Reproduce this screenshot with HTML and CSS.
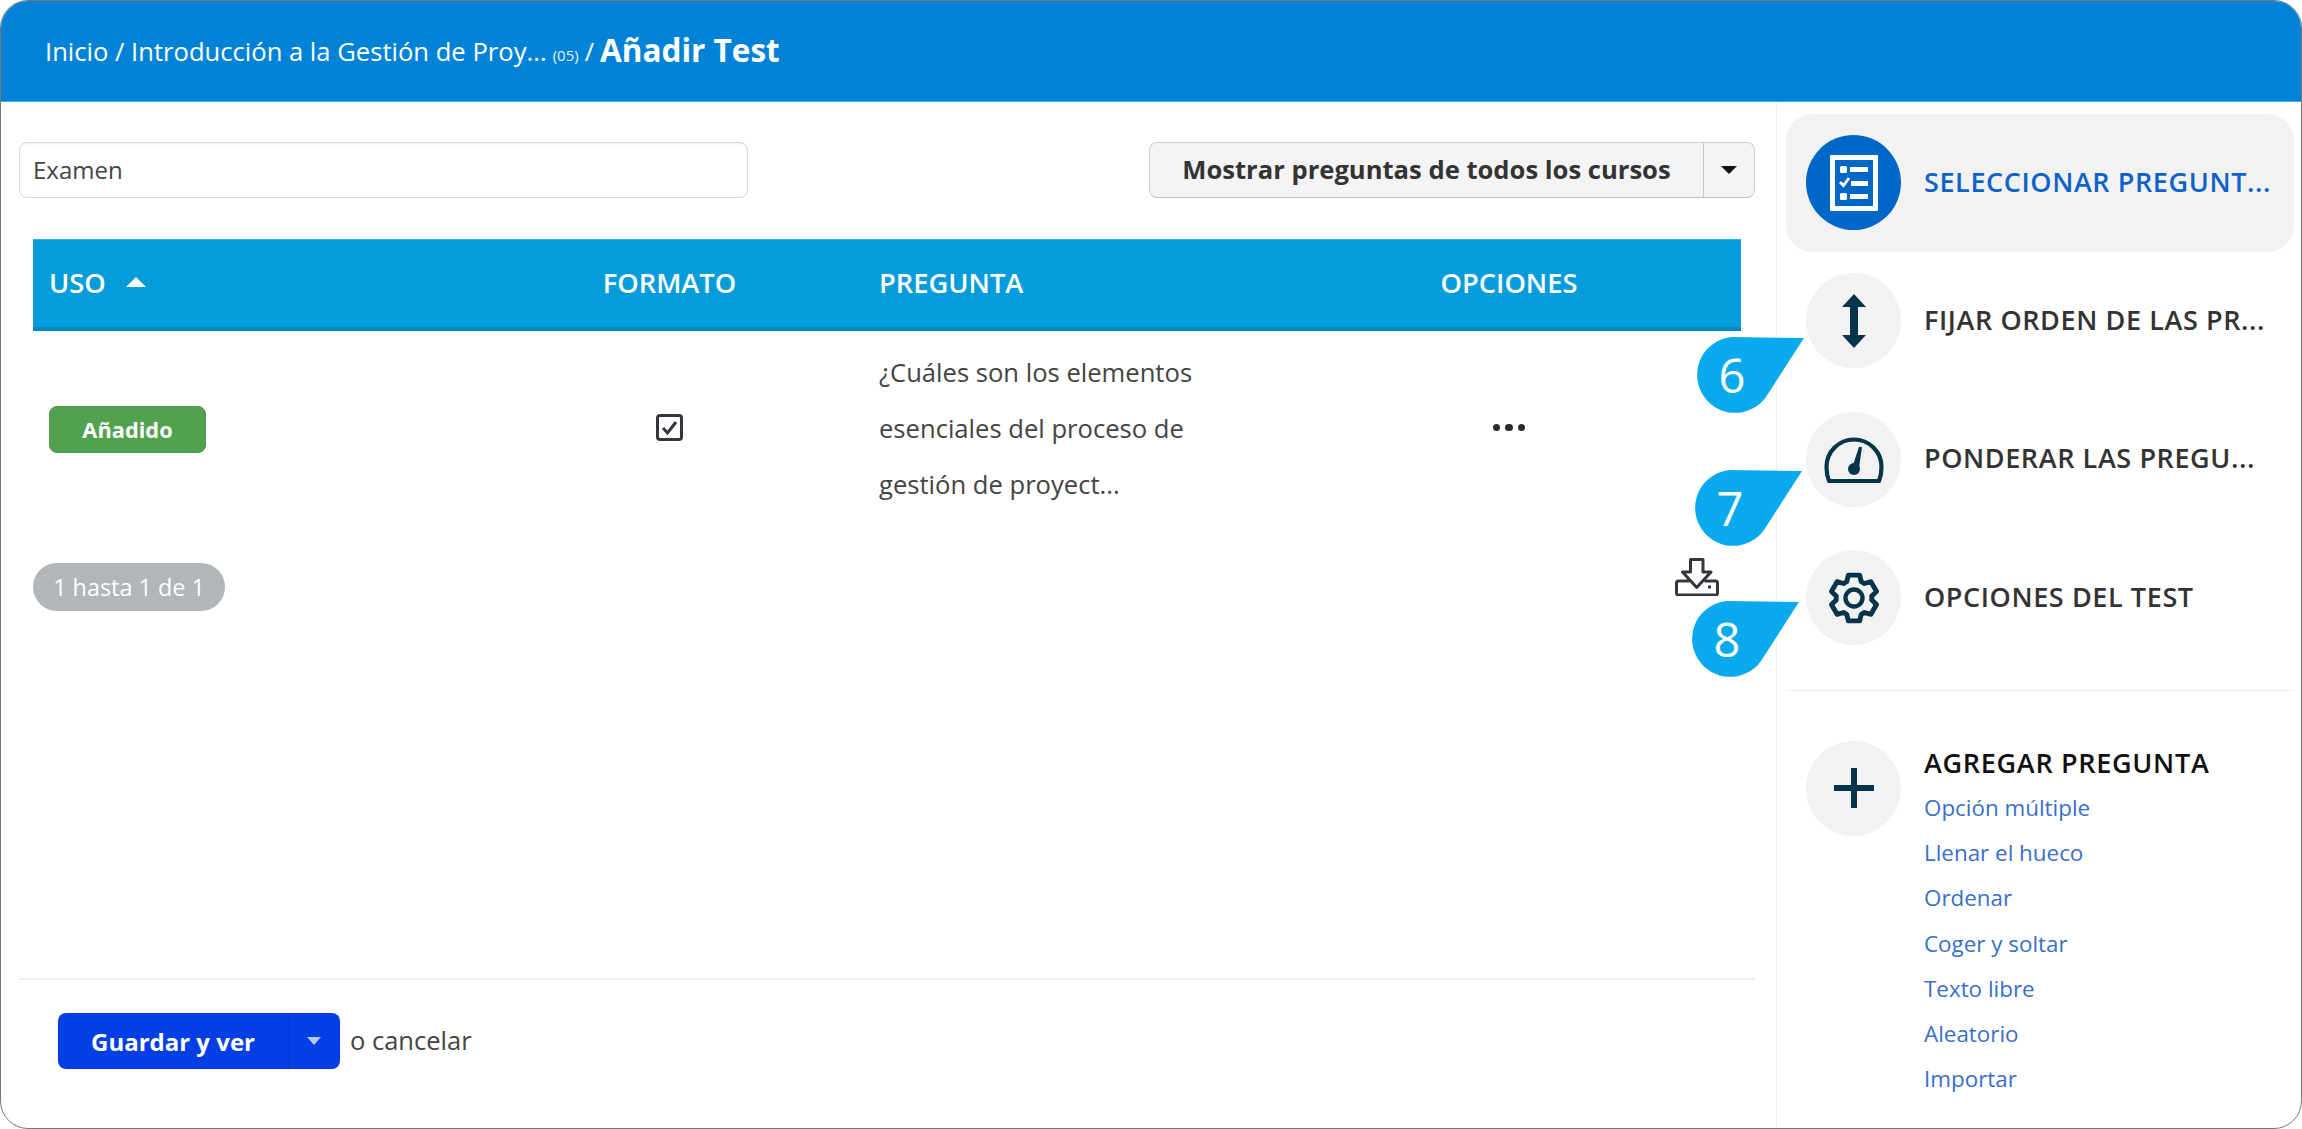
FILE: index.html
```html
<!DOCTYPE html>
<html lang="es">
<head>
<meta charset="utf-8">
<title>Añadir Test</title>
<link rel="stylesheet" href="styles.css">
</head>
<body>
<div class="frame">
  <header class="topbar">
    <span class="crumb">Inicio / Introducción a la Gestión de Proy...</span>
    <small class="count">(05)</small>
    <span class="crumb">/</span>
    <strong class="title">Añadir Test</strong>
  </header>
  <div class="layout">
    <main class="content">
      <div class="toolbar">
        <div class="search">Examen</div>
        <div class="split">
          <div class="split-label">Mostrar preguntas de todos los cursos</div>
          <div class="split-caret"><i class="caret"></i></div>
        </div>
      </div>
      <div class="table">
        <div class="thead">
          <div class="th th-first">USO <i class="sort"></i></div>
          <div class="th th-center">FORMATO</div>
          <div class="th">PREGUNTA</div>
          <div class="th th-center">OPCIONES</div>
        </div>
        <div class="trow">
          <div class="td"><span class="badge">Añadido</span></div>
          <div class="td td-center">
            <svg class="check" viewBox="0 0 27 27" width="27" height="27"><rect x="1.500" y="1.500" width="24" height="24" rx="2.500" fill="#fff" stroke="#33363f" stroke-width="3"/><path d="M7 14l4.500 5L20 8" fill="none" stroke="#33363f" stroke-width="3"/></svg>
          </div>
          <div class="td td-question">¿Cuáles son los elementos<br>esenciales del proceso de<br>gestión de proyect...</div>
          <div class="td td-center"><span class="dots"><i></i><i></i><i></i></span></div>
        </div>
      </div>
      <div class="pager">
        <span class="pill">1 hasta 1 de 1</span>
        <svg class="download" viewBox="0 0 43 38" width="44" height="38"><path d="M15 1.500h12.500v12.500h8L21.200 29.500 7 14h8zM14 23H3a2 2 0 0 0-2 2v10a2 2 0 0 0 2 2h37a2 2 0 0 0 2-2V25a2 2 0 0 0-2-2H29" fill="none" stroke="#33363f" stroke-width="3" stroke-linejoin="round"/><rect x="32.500" y="27.500" width="3" height="3" fill="#33363f"/></svg>
      </div>
      <div class="footer">
        <div class="save">
          <span class="save-label">Guardar y ver</span>
          <span class="save-caret"><i class="caret caret-light"></i></span>
        </div>
        <span class="cancel">o cancelar</span>
      </div>
    </main>
    <aside class="sidebar">
      <div class="item item-active">
        <span class="circle circle-active">
          <svg viewBox="0 0 48 56" width="48" height="56"><path fill="#fff" fill-rule="evenodd" d="M1 0h46a1 1 0 0 1 1 1v54a1 1 0 0 1-1 1H1a1 1 0 0 1-1-1V1a1 1 0 0 1 1-1zm4 5v46h38V5z"/><rect x="10" y="11" width="7" height="7" rx="1.500" fill="#fff"/><rect x="20" y="12" width="18" height="5" fill="#fff"/><path d="M10 27l3.500 3.500L19 23" fill="none" stroke="#fff" stroke-width="2.800"/><rect x="21" y="26" width="17" height="5" fill="#fff"/><rect x="10" y="38" width="7" height="7" rx="1.500" fill="#fff"/><rect x="20" y="39" width="18" height="5" fill="#fff"/></svg>
        </span>
        <span class="label label-active">SELECCIONAR PREGUNT...</span>
      </div>
      <div class="item">
        <span class="circle">
          <svg viewBox="0 0 24 54" width="24" height="54"><path fill="#05344b" d="M12 0l12 13h-8v28h8L12 54 0 41h8V13H0z"/></svg>
        </span>
        <span class="label">FIJAR ORDEN DE LAS PR...</span>
      </div>
      <div class="item">
        <span class="circle">
          <svg viewBox="0 0 60 48" width="60" height="48"><path d="M5 46C3 41 2.500 37 2.500 32a27.500 27.500 0 0 1 55 0c0 5-.5 9-2.500 14z" fill="none" stroke="#05344b" stroke-width="4.200" stroke-linejoin="round"/><path d="M35 12h3l-3 21h-7z" fill="#05344b"/><circle cx="30" cy="34" r="6" fill="#05344b"/></svg>
        </span>
        <span class="label">PONDERAR LAS PREGU...</span>
      </div>
      <div class="item">
        <span class="circle">
          <svg viewBox="-26 -26 52 52" width="52" height="52"><path d="M-7.700-17.400L-6-24.300H6L7.700-17.400L11.200-15.400L18-17.350L24-6.950L18.900-2.030V2.030L24 6.950L18 17.350L11.200 15.400L7.700 17.400L6 24.300H-6L-7.700 17.400L-11.200 15.400L-18 17.350L-24 6.950L-18.900 2.030V-2.030L-24-6.950L-18-17.350L-11.200-15.400z" transform="scale(.94)" fill="none" stroke="#05344b" stroke-width="5.200" stroke-linejoin="round"/><circle r="8.500" fill="none" stroke="#05344b" stroke-width="4.400"/></svg>
        </span>
        <span class="label">OPCIONES DEL TEST</span>
      </div>
      <div class="add">
        <span class="circle">
          <svg viewBox="0 0 40 40" width="40" height="40"><path d="M20 0v40M0 20h40" stroke="#05344b" stroke-width="6"/></svg>
        </span>
        <div class="add-list">
          <div class="add-title">AGREGAR PREGUNTA</div>
          <a class="add-link">Opción múltiple</a>
          <a class="add-link">Llenar el hueco</a>
          <a class="add-link">Ordenar</a>
          <a class="add-link">Coger y soltar</a>
          <a class="add-link">Texto libre</a>
          <a class="add-link">Aleatorio</a>
          <a class="add-link">Importar</a>
        </div>
      </div>
    </aside>
  </div>
  <div class="callout callout-6"><svg viewBox="0 0 112 78" width="112" height="78"><path fill="#09a9ee" d="M38 0L110 1 72 60A38 38 0 1 1 38 0z"/></svg><span>6</span></div>
  <div class="callout callout-7"><svg viewBox="0 0 112 78" width="112" height="78"><path fill="#09a9ee" d="M38 0L110 1 72 60A38 38 0 1 1 38 0z"/></svg><span>7</span></div>
  <div class="callout callout-8"><svg viewBox="0 0 112 78" width="112" height="78"><path fill="#09a9ee" d="M38 0L110 1 72 60A38 38 0 1 1 38 0z"/></svg><span>8</span></div>
</div>
</body>
</html>
```
FILE: styles.css
```css
* { box-sizing: border-box; }
html, body { margin: 0; background: #fff; }
body { font-family: "Open Sans", "Liberation Sans", sans-serif; color: #3a3a3a; }
i { display: block; }
.frame {
  position: relative;
  height: 1129px;
  border: 1px solid #777;
  border-radius: 28px;
  overflow: hidden;
  display: flex;
  flex-direction: column;
}
.topbar {
  height: 101px;
  flex: none;
  background: #0083d7;
  border-bottom: 1px solid #4aa8e2;
  color: #fff;
  display: flex;
  align-items: center;
  padding: 0 0 0 44px;
  gap: 6px;
  white-space: nowrap;
}
.crumb { font-size: 25.600px; }
.count { font-size: 15px; margin-top: 8px; opacity: .9; }
.title { font-size: 31.500px; font-weight: 700; margin-top: -3px; }
.layout { flex: 1; display: flex; min-height: 0; }
.content {
  width: 1775px;
  flex: none;
  padding: 40px 21px 0 18px;
  display: flex;
  flex-direction: column;
}
.toolbar { display: flex; justify-content: space-between; align-items: center; }
.search {
  width: 729px;
  height: 56px;
  border: 1px solid #d3d8de;
  border-radius: 8px;
  box-shadow: inset 0 1px 2px rgba(0,0,0,.08);
  padding: 0 0 2px 13px;
  display: flex;
  align-items: center;
  font-size: 24px;
  color: #454545;
}
.split {
  width: 606px;
  height: 56px;
  display: flex;
  background: #f4f4f4;
  border: 1px solid #cfcfcf;
  border-bottom-color: #bdbdbd;
  border-radius: 8px;
}
.split-label {
  flex: 1;
  display: flex;
  align-items: center;
  justify-content: center;
  padding-bottom: 2px;
  font-size: 25.600px;
  font-weight: 700;
  color: #333;
  border-right: 1px solid #c9c9c9;
}
.split-caret { width: 50px; display: flex; align-items: center; justify-content: center; }
.caret {
  width: 0; height: 0;
  border-left: 8px solid transparent;
  border-right: 8px solid transparent;
  border-top: 8px solid #111;
}
.caret-light { border-left-width: 7px; border-right-width: 7px; border-top-color: #b6c6f5; }
.table { margin: 41px 0 0 14px; width: 1708px; }
.thead, .trow { display: grid; grid-template-columns: 443px 387px 414px 464px; }
.thead {
  height: 92px;
  background: #059cdc;
  border-top: 1px solid #35b0e4;
  border-bottom: 4px solid #0487bf;
  align-items: center;
}
.th { color: #fff; font-size: 27.300px; font-weight: 600; padding: 0 0 3px 16px; display: flex; align-items: center; }
.th-center { justify-content: center; padding-left: 0; }
.sort {
  width: 0; height: 0;
  margin: 0 0 0 20px;
  border-left: 10px solid transparent;
  border-right: 10px solid transparent;
  border-bottom: 10px solid #fff;
}
.trow { padding: 14px 0 15px; font-size: 24px; line-height: 56px; align-items: center; }
.td { padding-left: 16px; display: flex; align-items: center; }
.td-center { padding-left: 0; justify-content: center; margin-top: -3px; }
.td-question { display: block; font-size: 25.600px; color: #444; white-space: nowrap; }
.badge {
  width: 157px;
  height: 47px;
  margin-top: 1px;
  background: #51a14f;
  border: 1px solid #4b994a;
  border-radius: 8px;
  color: #fff;
  font-size: 21.800px;
  font-weight: 700;
  display: flex;
  align-items: center;
  justify-content: center;
}
.dots { display: flex; gap: 5px; }
.dots i { width: 7.500px; height: 7.500px; border-radius: 50%; background: #2c2c30; }
.pager { display: flex; justify-content: space-between; margin: 35px 36px 0 14px; align-items: flex-start; }
.pill {
  width: 192px;
  height: 48px;
  border-radius: 24px;
  background: #b0b6b9;
  color: #fff;
  font-size: 23.400px;
  display: flex;
  align-items: center;
  justify-content: center;
}
.download { margin-top: -5px; }
.footer {
  margin-top: auto;
  height: 150px;
  border-top: 2px solid #eeeef0;
  padding: 33px 0 0 39px;
  display: flex;
  align-items: flex-start;
  gap: 10px;
}
.save {
  width: 282px;
  height: 56px;
  display: flex;
  background: #033fe5;
  border-radius: 8px;
  color: #fff;
}
.save-label {
  flex: 1;
  font-size: 24px;
  font-weight: 700;
  display: flex;
  align-items: center;
  justify-content: center;
  border-right: 1px solid #0537cf;
}
.save-caret { width: 51px; display: flex; align-items: center; justify-content: center; padding-right: 2px; }
.cancel { font-size: 25.500px; line-height: 54px; color: #444; }
.sidebar {
  flex: 1;
  border-left: 1px solid #f1f1f4;
  padding: 11.500px 7px 0 9px;
}
.item {
  height: 138.300px;
  display: flex;
  align-items: center;
  gap: 23px;
  padding-left: 20px;
  border-radius: 26px;
}
.item-active { background: #f2f2f2; }
.circle {
  width: 95px;
  height: 95px;
  flex: none;
  border-radius: 50%;
  background: #f2f2f2;
  display: flex;
  align-items: center;
  justify-content: center;
}
.circle-active { background: #0066c8; }
.label { font-size: 27px; font-weight: 600; letter-spacing: .6px; color: #333; white-space: nowrap; margin-top: -3px; }
.label-active { color: #0d63c9; }
.add {
  margin-top: 23px;
  border-top: 1px solid #ececee;
  padding: 50px 0 0 20px;
  display: flex;
  align-items: flex-start;
  gap: 23px;
}
.add-list { display: flex; flex-direction: column; }
.add-title { font-size: 27px; font-weight: 600; letter-spacing: .7px; color: #111; line-height: 45px; margin-top: -1px; }
.add-link { font-size: 22.400px; line-height: 45.300px; color: #3a6fc9; }
.callout { position: absolute; width: 112px; height: 78px; }
.callout svg { display: block; }
.callout span {
  position: absolute;
  left: 0;
  top: 0;
  width: 76px;
  height: 76px;
  display: flex;
  align-items: center;
  justify-content: center;
  color: #fff;
  font-size: 47px;
  font-weight: 400;
}
.callout-6 { left: 1693px; top: 336px; }
.callout-7 { left: 1691px; top: 469px; }
.callout-8 { left: 1688px; top: 600px; }
```
